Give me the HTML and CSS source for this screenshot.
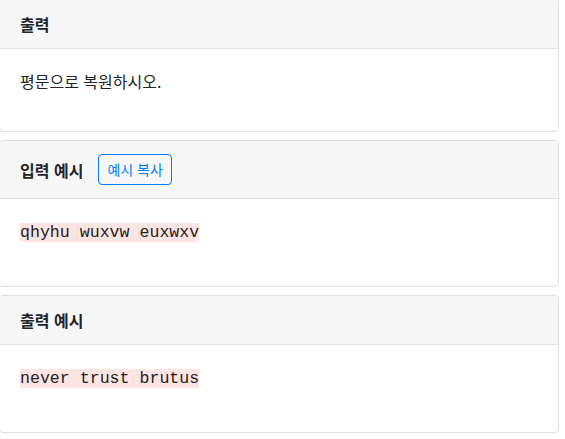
FILE: index.html
```html
<!DOCTYPE html>
<html lang="ko">
<head>
<meta charset="utf-8">
<link rel="stylesheet" href="styles.css">
</head>
<body>
<div class="page">
  <section class="card">
    <div class="card-header"><h3 class="title">출력</h3></div>
    <div class="card-body"><p class="text">평문으로 복원하시오.</p></div>
  </section>
  <section class="card">
    <div class="card-header card-header--tool">
      <h3 class="title">입력 예시</h3>
      <button class="copy-btn" type="button">예시 복사</button>
    </div>
    <div class="card-body"><pre class="sample"><code class="code">qhyhu wuxvw euxwxv</code></pre></div>
  </section>
  <section class="card">
    <div class="card-header"><h3 class="title">출력 예시</h3></div>
    <div class="card-body"><pre class="sample"><code class="code">never trust brutus</code></pre></div>
  </section>
</div>
</body>
</html>
```
FILE: styles.css
```css
html, body {
  margin: 0;
  padding: 0;
  background: #fff;
}
body {
  font-family: "Noto Sans CJK KR", "Noto Sans", sans-serif;
  color: #212529;
  font-size: 16px;
  overflow: hidden;
}
.page {
  margin: -1px 6px 0 -1px;
  display: flex;
  flex-direction: column;
  gap: 8px;
}
.card {
  border: 1px solid #dfdfdf;
  border-radius: 4px;
  background: #fff;
  overflow: hidden;
}
.card-header {
  background: #f7f7f7;
  border-bottom: 1px solid #dfdfdf;
  padding: 12px 20px;
  display: flex;
  align-items: center;
  gap: 15px;
}
.card-header--tool {
  padding: 13px 20px;
}
.title {
  margin: 0;
  font-size: 16px;
  font-weight: 700;
  line-height: 24px;
  color: #212529;
}
.copy-btn {
  font-family: "Noto Sans CJK KR", "Noto Sans", sans-serif;
  font-size: 14px;
  line-height: 21px;
  padding: 4px 8px;
  color: #007bff;
  background: transparent;
  border: 1px solid #007bff;
  border-radius: 4px;
  cursor: pointer;
}
.card-body {
  padding: 20px 20px 20px 20px;
}
.text {
  margin: 0 0 18px;
  line-height: 24px;
}
.sample {
  margin: 0 0 20px;
  line-height: 27px;
  font-family: "Liberation Mono", "DejaVu Sans Mono", monospace;
  font-size: 16.6px;
}
.code {
  background: #fee4e2;
  color: #222;
  font-family: inherit;
  padding: 0;
}
```
